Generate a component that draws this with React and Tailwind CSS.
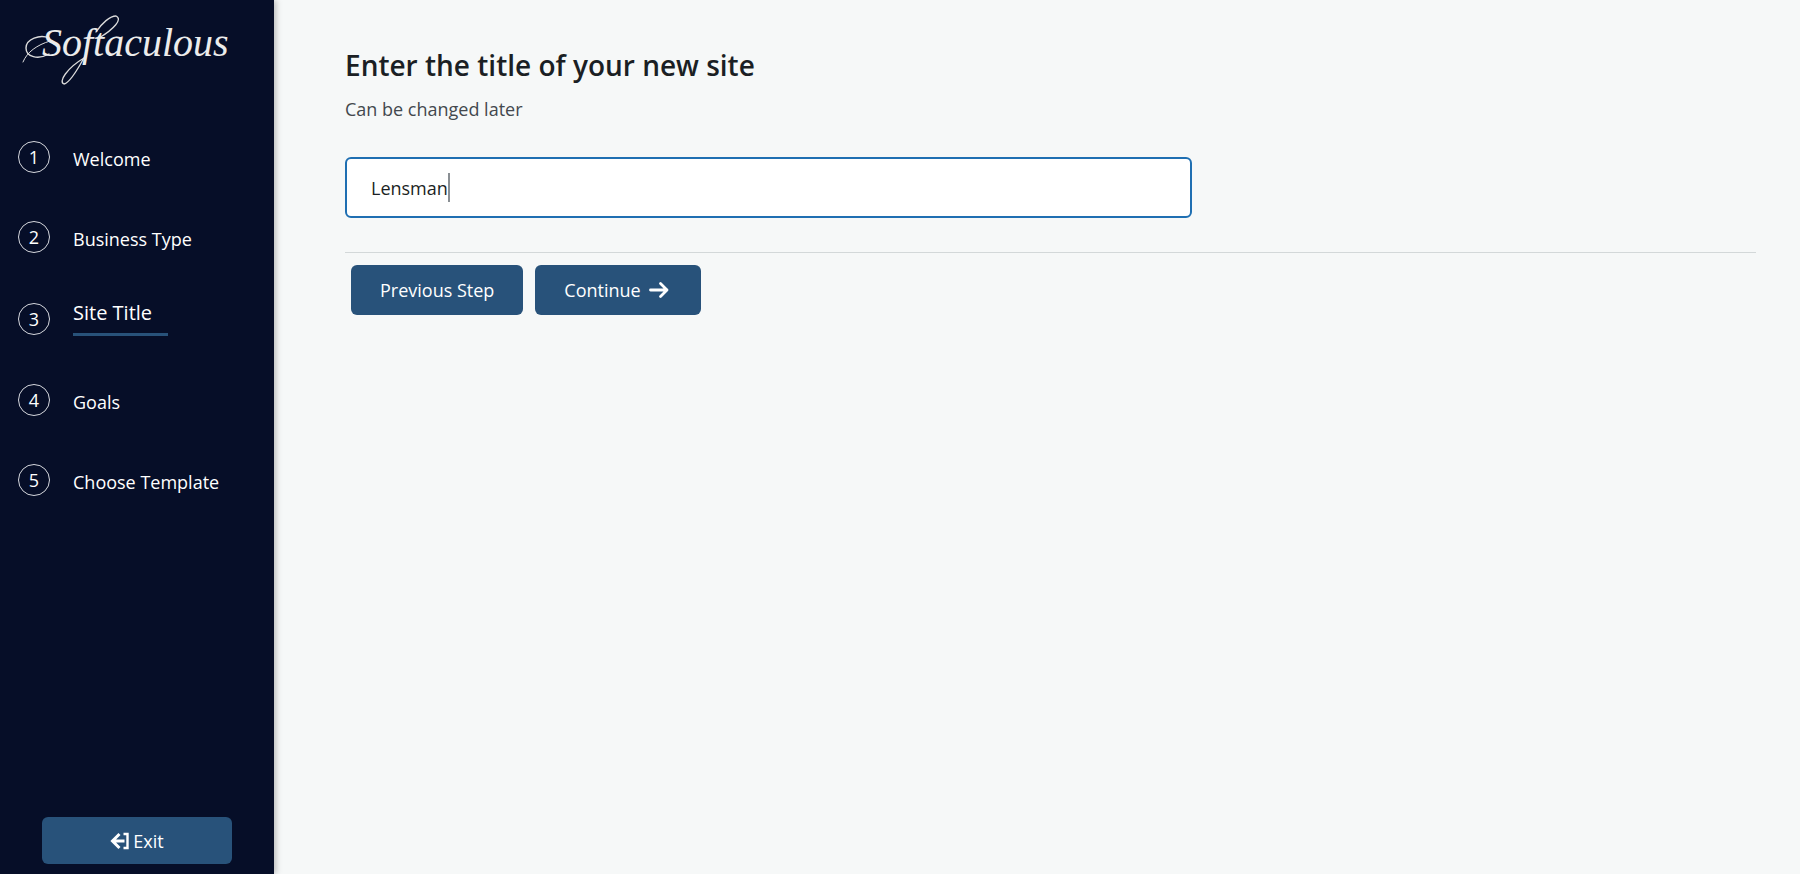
import { useState } from 'react';

const steps = ['Welcome', 'Business Type', 'Site Title', 'Goals', 'Choose Template'];

function Logo() {
  return (
    <svg viewBox="0 0 212 76" className="w-[212px] h-[76px]" role="img" aria-label="Softaculous">
      {/* flourishes around the wordmark */}
      <g fill="none" stroke="#dcdcdc" strokeLinecap="round">
        <path d="M3 50C7 40 17 33 30 29" strokeWidth="1" />
        <path d="M29 26C20 22 6 27 6 36C6 45 18 48 29 42" strokeWidth="1.4" />
        <path d="M76 20C82 11 90 4 96 4C103 7 94 17 79 26" strokeWidth="1.3" />
        <path d="M65 44C58 57 50 71 44 72C38 70 47 56 64 46" strokeWidth="1.3" />
      </g>
      <text x="22" y="44" fill="#ececec" fontSize="40" fontStyle="italic" fontFamily="Liberation Serif, serif">
        Softaculous
      </text>
    </svg>
  );
}

function Step({ number, label, active }) {
  return (
    <li className="flex items-center gap-[23px]">
      <span className="flex size-8 shrink-0 items-center justify-center rounded-full border border-[#d5d7dd] text-lg leading-6">
        {number}
      </span>
      {active ? (
        <span className="w-[95px] border-b-3 border-[#28527a] pb-2 text-xl leading-6 whitespace-nowrap">{label}</span>
      ) : (
        <span className="pt-1 text-lg leading-6 whitespace-nowrap">{label}</span>
      )}
    </li>
  );
}

function ArrowRight() {
  return (
    <svg viewBox="0 0 20 18" className="w-5 h-[18px]" fill="none" stroke="currentColor" strokeWidth="2.8" strokeLinejoin="round" strokeLinecap="round" aria-hidden="true">
      <path d="M1.5 9H18M11.5 2.5L18 9L11.5 15.5" />
    </svg>
  );
}

function ExitIcon() {
  return (
    <svg viewBox="0 0 20 18" className="w-5 h-[18px]" fill="none" stroke="currentColor" strokeWidth="3" aria-hidden="true">
      <path d="M14.5 9H2.5M9.5 2L2.5 9L9.5 16" />
      <path d="M13.5 2H17.5V16H13.5" strokeWidth="2.4" />
    </svg>
  );
}

export default function App() {
  const [title, setTitle] = useState('Lensman');

  return (
    <div className="flex min-h-screen bg-[#f6f8f8] font-['Open_Sans','Noto_Sans',sans-serif] text-[#1b1f24]">
      {/* Sidebar */}
      <aside className="flex w-[274px] shrink-0 flex-col bg-[#060e28] text-white shadow-[2px_0_6px_rgba(0,0,0,0.25)]">
        <div className="px-5 pt-3">
          <Logo />
        </div>
        <ol className="mt-[53px] flex flex-col gap-12 pl-[18px]">
          {steps.map((label, i) => (
            <Step key={label} number={i + 1} label={label} active={i === 2} />
          ))}
        </ol>
        <button type="button" className="mx-[42px] mt-auto mb-[10px] flex h-[47px] items-center justify-center gap-[3px] rounded-md bg-[#28527a] text-lg">
          <ExitIcon />
          Exit
        </button>
      </aside>

      {/* Title form */}
      <main className="min-w-0 flex-1 pt-[47px] pr-11 pl-[71px]">
        <h1 className="text-[28px] leading-9 font-semibold">
          <label htmlFor="site-title">Enter the title of your new site</label>
        </h1>
        <p className="mt-3 text-lg leading-7 text-[#43484e]">Can be changed later</p>
        <div className="relative mt-[34px] w-3/5">
          <input
            id="site-title"
            type="text"
            value={title}
            onChange={(e) => setTitle(e.target.value)}
            className="block h-[61px] w-full rounded-md border-2 border-[#1f6fb2] bg-white px-6 text-lg caret-transparent outline-none"
          />
          <span className="pointer-events-none absolute inset-y-4 left-[26px] border-r-2 border-[#8a8f94] text-lg text-transparent select-none" aria-hidden="true">
            {title}
          </span>
        </div>
        <hr className="mt-[34px] border-[#d3d8d9]" />
        <div className="mt-3 flex gap-3 px-[6px] text-lg text-white">
          <button type="button" className="h-[50px] rounded-md bg-[#28527a] px-[29px]">
            Previous Step
          </button>
          <button type="button" className="flex h-[50px] items-center gap-2 rounded-md bg-[#28527a] pr-8 pl-[29px]">
            Continue
            <ArrowRight />
          </button>
        </div>
      </main>
    </div>
  );
}
